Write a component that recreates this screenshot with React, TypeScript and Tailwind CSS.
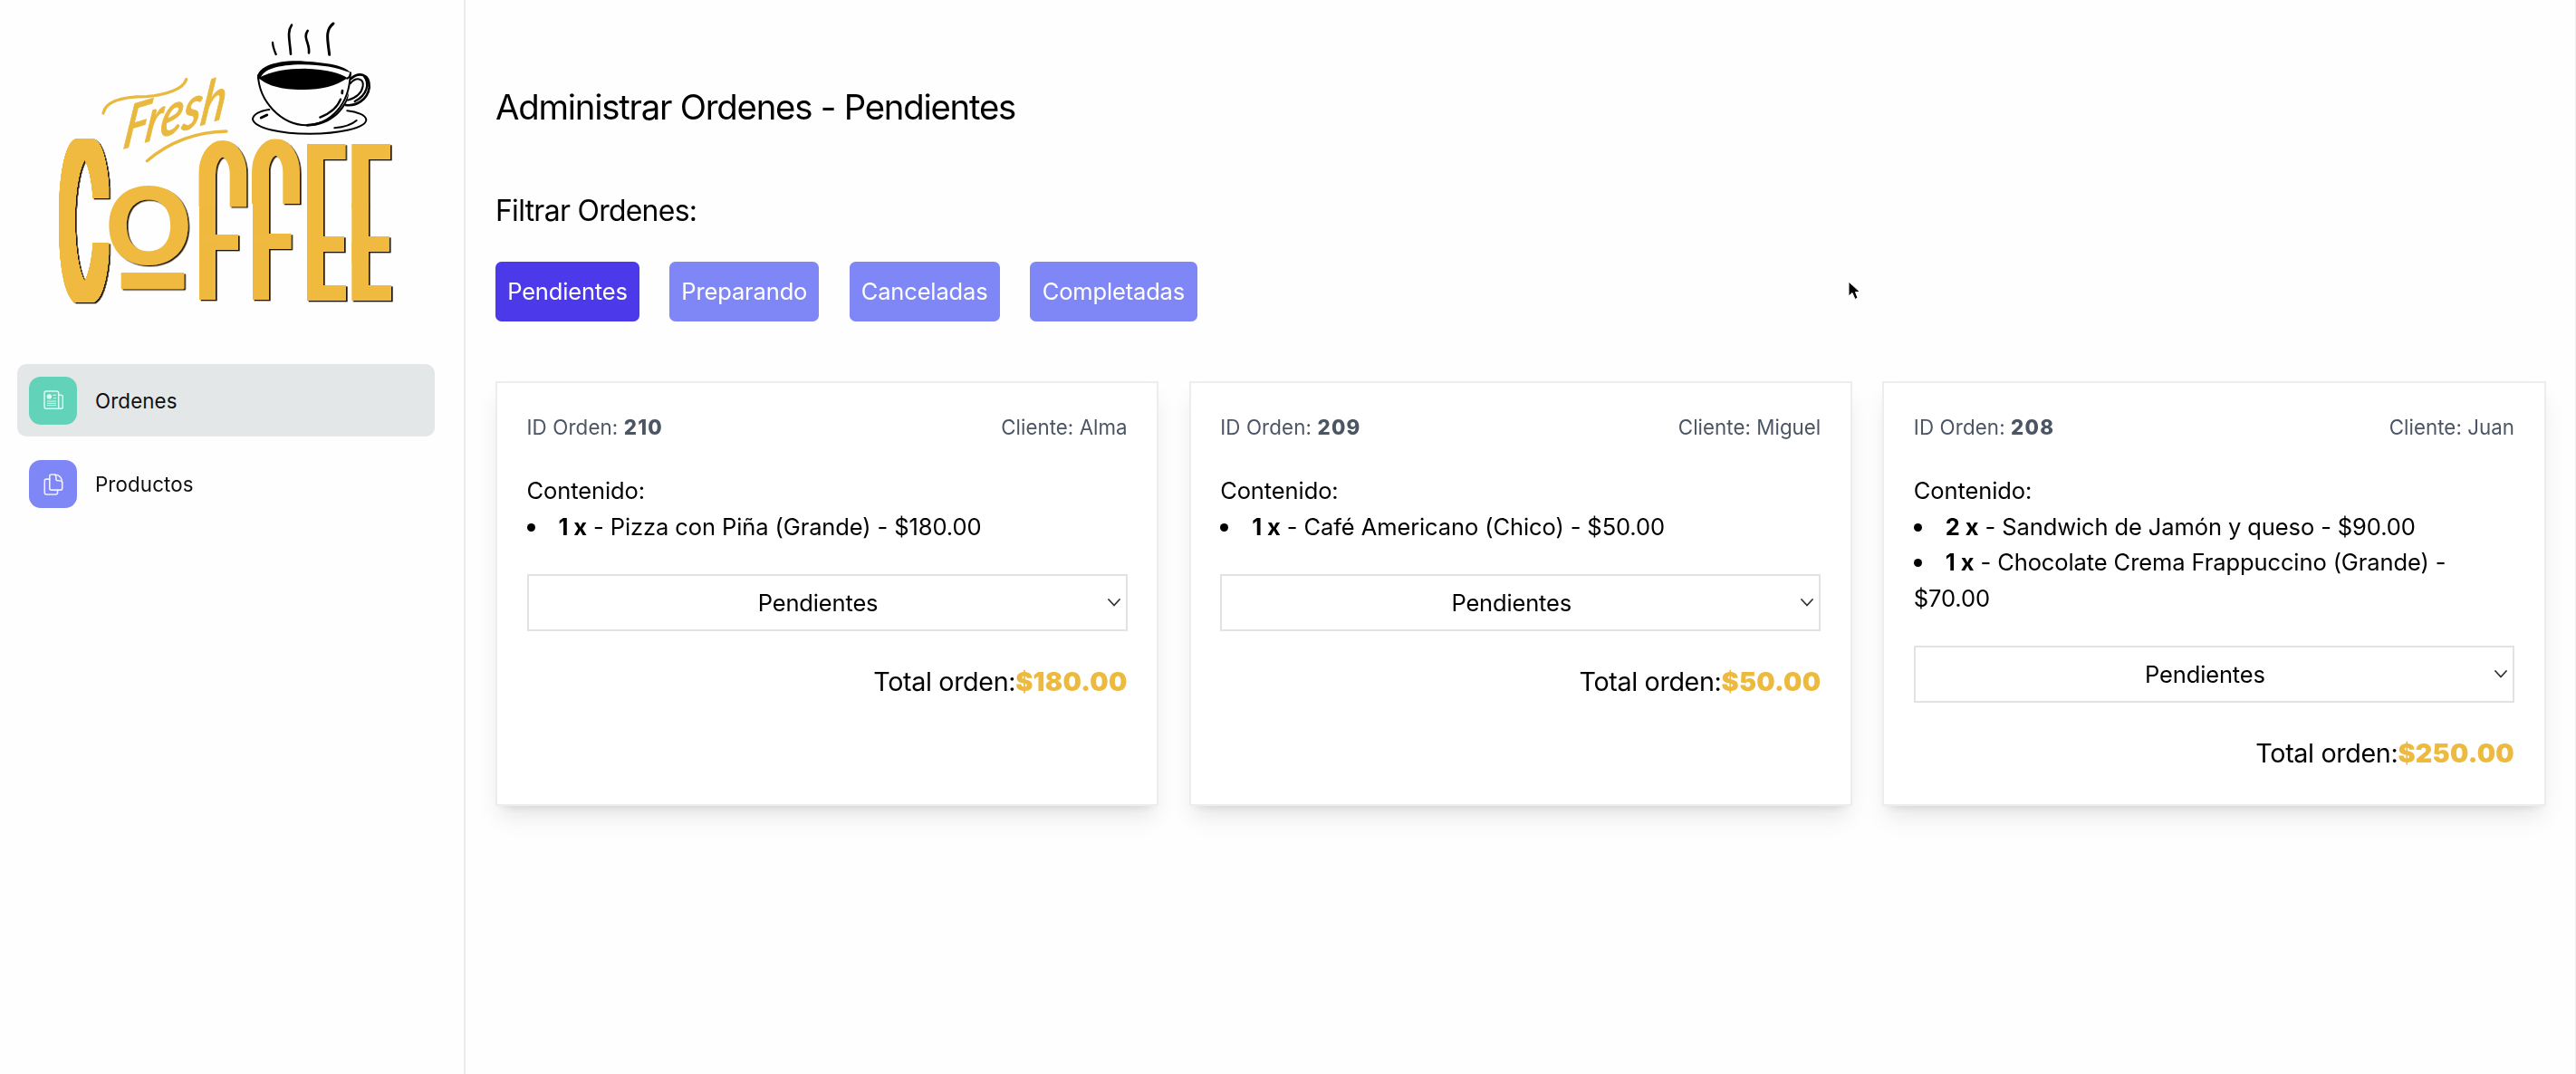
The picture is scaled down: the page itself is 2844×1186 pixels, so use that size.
import type { ReactNode } from "react";

type Line = { qty: number; text: string };
type Order = { id: number; client: string; lines: Line[]; total: string };

const orders: Order[] = [
  { id: 210, client: "Alma", lines: [{ qty: 1, text: "Pizza con Piña (Grande) - $180.00" }], total: "$180.00" },
  { id: 209, client: "Miguel", lines: [{ qty: 1, text: "Café Americano (Chico) - $50.00" }], total: "$50.00" },
  {
    id: 208,
    client: "Juan",
    lines: [
      { qty: 2, text: "Sandwich de Jamón y queso - $90.00" },
      { qty: 1, text: "Chocolate Crema Frappuccino (Grande) - $70.00" },
    ],
    total: "$250.00",
  },
];

const filters = [
  { label: "Pendientes", style: "w-[159px] bg-[#4b39ea]" },
  { label: "Preparando", style: "w-[165px] bg-[#7f86f5]" },
  { label: "Canceladas", style: "w-[166px] bg-[#7f86f5]" },
  { label: "Completadas", style: "w-[185px] bg-[#7f86f5]" },
];

function Letter({ children, transform }: { children: string; transform: string }) {
  return (
    <text transform={transform} fontFamily="Inter" fontWeight="100" fontSize="100">
      {children}
    </text>
  );
}

function Cup() {
  return (
    <g transform="translate(690 45)" fill="none" stroke="#000" strokeLinecap="round" strokeWidth="6">
      <path d="M93 96Q94 112 104 135" strokeWidth="7" />
      <path d="M156 38C140 60 150 90 153 134" strokeWidth="8" />
      <path d="M209 57C192 80 217 98 213 130" strokeWidth="8" />
      <path d="M294 33C265 55 276 90 281 136" strokeWidth="9" />
      <path d="M82 318C50 322 28 335 27 350C35 380 120 398 215 398C310 398 402 380 403 352C402 335 370 325 340 322" />
      <path d="M45 205C48 290 120 368 205 370C285 368 348 300 350 200" />
      <path d="M205 374C290 374 345 310 345 262C325 325 280 362 205 366Z" fill="#000" stroke="none" />
      <path d="M43 218C36 175 110 152 200 158C270 162 335 172 351 196C300 178 260 170 190 169C110 170 62 184 52 216Z" fill="#000" stroke="none" />
      <path d="M351 196Q352 208 340 215" />
      <path d="M46 213C90 190 140 182 200 182C270 184 320 197 341 214C300 242 250 253 190 252C120 251 80 241 46 213Z" fill="#000" stroke="none" />
      <path d="M352 216C378 192 415 198 413 245C408 285 370 308 335 303" strokeWidth="8" />
      <path d="M396 208C415 232 406 270 365 291" strokeWidth="7" />
      <path d="M350 232C370 208 395 215 392 240C388 265 365 280 342 287" />
      <path d="M250 344C290 328 310 305 318 284" strokeWidth="7" />
      <path d="M324 255L323 264" strokeWidth="8" />
      <path d="M55 345L74 336" strokeWidth="9" />
      <path d="M298 379C330 376 355 368 371 354" />
    </g>
  );
}

function Logo() {
  return (
    <svg viewBox="0 0 1260 1200" className="ml-[40px] h-[400px] w-[420px] shrink-0" aria-label="Fresh Coffee">
      <defs>
        <filter id="heavy" filterUnits="userSpaceOnUse" x="0" y="399" width="1260" height="681">
          <feMorphology operator="dilate" radius="24 18" />
          <feComponentTransfer>
            <feFuncA type="linear" slope="3" />
          </feComponentTransfer>
        </filter>
        {/* Thickens the letters and drops their crossbar below the middle. */}
        <filter id="heavyLowBar" filterUnits="userSpaceOnUse" x="0" y="399" width="1260" height="681">
          <feMorphology operator="dilate" radius="24 18" />
          <feComponentTransfer result="thick">
            <feFuncA type="linear" slope="3" />
          </feComponentTransfer>
          <feOffset in="thick" dx="0" dy="0" x="0" width="1260" y="399" height="291" result="top" />
          <feOffset in="thick" dx="0" dy="0" x="0" width="1260" y="600" height="201" result="band" />
          <feOffset in="band" dx="0" dy="72" x="0" y="399" width="1260" height="681" result="bar" />
          <feOffset in="thick" dx="0" dy="0" x="0" width="1260" y="801" height="279" result="bottom" />
          <feMerge>
            <feMergeNode in="top" />
            <feMergeNode in="bar" />
            <feMergeNode in="bottom" />
          </feMerge>
        </filter>
        <filter id="relief" filterUnits="userSpaceOnUse" x="0" y="399" width="1260" height="681">
          <feDropShadow dx="5" dy="4" stdDeviation="0.8" floodColor="#1d1500" floodOpacity="1" />
        </filter>
        <clipPath id="archA"><rect x="538" y="465" width="159" height="640" rx="79" ry="114" /></clipPath>
        <clipPath id="archB"><rect x="714" y="460" width="159" height="640" rx="79" ry="114" /></clipPath>
        <clipPath id="hookA"><rect x="500" y="400" width="240" height="285" /></clipPath>
        <clipPath id="hookB"><rect x="700" y="400" width="240" height="275" /></clipPath>
      </defs>
      <Cup />
      <g fill="#e9b93f" transform="translate(195 225)">
        <text
          transform="translate(88 270) rotate(-17) skewX(-26) scale(.8 1)"
          fontFamily="Lato"
          fontStyle="italic"
          fontWeight="500"
          fontSize="184"
          textLength="440"
          lengthAdjust="spacingAndGlyphs"
          stroke="#e9b93f"
          strokeWidth="3"
          strokeLinejoin="round"
        >
          Fresh
        </text>
        <g fill="none" stroke="#e9b93f" strokeLinecap="round" strokeWidth="10">
          <path d="M27 150C35 110 90 95 170 95C235 90 292 70 302 38" />
          <path d="M172 308C240 250 330 212 435 210" />
        </g>
      </g>
      <g fill="#f0ba3f" filter="url(#relief)">
        <g filter="url(#heavy)">
          <Letter transform="translate(85 979) scale(2.02 6.8)">C</Letter>
        </g>
        <text x="372" y="876" textAnchor="middle" fontFamily="Inter" fontWeight="700" fontSize="352" textLength="297" lengthAdjust="spacingAndGlyphs">O</text>
        <rect x="281" y="903" width="209" height="55" rx="4" />
        <g clipPath="url(#archA)">
          <g filter="url(#heavyLowBar)">
            <Letter transform="translate(540 974) scale(2.2 6.74)">F</Letter>
          </g>
        </g>
        <g clipPath="url(#hookA)">
          <rect x="566" y="493" width="103" height="400" rx="51" ry="85" fill="none" stroke="#f0ba3f" strokeWidth="56" />
        </g>
        <g clipPath="url(#archB)">
          <g filter="url(#heavyLowBar)">
            <Letter transform="translate(716 974) scale(2.2 6.8)">F</Letter>
          </g>
        </g>
        <g clipPath="url(#hookB)">
          <rect x="742" y="488" width="103" height="400" rx="51" ry="85" fill="none" stroke="#f0ba3f" strokeWidth="56" />
        </g>
        <g filter="url(#heavyLowBar)">
          <Letter transform="translate(899 977) scale(2 6.63)">E</Letter>
          <Letter transform="translate(1048 977) scale(2 6.63)">E</Letter>
        </g>
      </g>
    </svg>
  );
}

function NewsIcon() {
  return (
    <svg viewBox="0 0 66 66" className="size-[22px]" fill="none" stroke="#d9fbf3" strokeWidth="4.5" strokeLinejoin="round" strokeLinecap="round">
      <path d="M50 61H9Q3 61 3 55V9Q3 3 9 3H44Q50 3 50 9V55Q50 61 57 61Q64 61 64 55V22Q64 16 58 16H50" />
      <circle cx="19" cy="21" r="6" fill="#d9fbf3" />
      <path d="M32 16H41M34 26H41M13 36H41M13 43H41M13 50H41" strokeWidth="3" />
    </svg>
  );
}

function CopyIcon() {
  return (
    <svg viewBox="0 0 66 74" className="h-[24px] w-[22px]" fill="none" stroke="#eeeeff" strokeWidth="5" strokeLinejoin="round" strokeLinecap="round">
      <path d="M20 19H9Q3 19 3 25V65Q3 71 9 71H41Q47 71 47 65V56" />
      <path d="M26 3H38Q62 6 63 31V50Q63 56 57 56H26Q20 56 20 50V9Q20 3 26 3Z" />
      <path d="M38 4Q43 8 42 14V20Q43 24 48 24H54Q61 24 63 30" />
    </svg>
  );
}

function NavItem({ icon, label, active, tile }: { icon: ReactNode; label: string; active?: boolean; tile: string }) {
  return (
    <a className={`ml-[19px] flex h-[80px] w-[461px] items-center rounded-[10px] px-[13px] ${active ? "bg-[#e4e7e7]" : ""}`}>
      <span className={`flex size-[53px] items-center justify-center rounded-[13px] ${tile}`}>{icon}</span>
      <span className="ml-[20px] text-[22.3px] leading-[33px] tracking-[0.006em] text-[#111]">{label}</span>
    </a>
  );
}

function OrderCard({ order }: { order: Order }) {
  return (
    <article className="flex flex-col border-2 border-[#ebeeee] bg-white p-[32.5px] shadow-[0_16px_25px_-5px_rgba(0,0,0,0.1),0_7px_10px_-6px_rgba(0,0,0,0.1)]">
      <div className="flex justify-between text-[22.3px] leading-[32px] text-[#4b5563]">
        <p className="tracking-[0.006em]">
          ID Orden: <span className="font-extrabold tracking-[0.055em]">{order.id}</span>
        </p>
        <p className="tracking-[0.002em]">Cliente: {order.client}</p>
      </div>
      <div className="mt-[34.5px] text-[25.5px] leading-[39.5px] tracking-[-0.004em]">
        <p>Contenido:</p>
        <ul>
          {order.lines.map((line) => (
            <li key={line.text}>
              <span className="mr-[26px] mb-[4px] inline-block size-[9px] rounded-full bg-black align-baseline" />
              <span className="font-bold">{line.qty} x</span> - {line.text}
            </li>
          ))}
        </ul>
      </div>
      <button className="mt-[33px] flex h-[63px] shrink-0 items-center border-2 border-[#dfe3e4] pr-[6px] text-[25.5px] tracking-[-0.006em]">
        <span className="flex-1 pt-px text-center">Pendientes</span>
        <svg viewBox="0 0 14 9" className="h-[9px] w-[14px]" fill="none" stroke="#333" strokeWidth="1.8" strokeLinecap="round">
          <path d="M1 1L7 7.5L13 1" />
        </svg>
      </button>
      <p className="mt-[33px] text-right text-[28.7px] leading-[46px] tracking-[-0.012em]">
        Total orden:<span className="font-black tracking-[0.009em] text-[#edba40]">{order.total}</span>
      </p>
    </article>
  );
}

export default function App() {
  return (
    <div className="relative flex h-[1186px] w-[2844px] overflow-hidden border-r border-[#ececec] bg-[#fefefe] font-['Inter',sans-serif] text-black">
      <aside className="flex w-[514px] shrink-0 flex-col border-r-2 border-[#e9ecec]">
        <Logo />
        <nav className="mt-[2px] flex flex-col gap-[12.5px]">
          <NavItem icon={<NewsIcon />} label="Ordenes" active tile="bg-[#62d2b9]" />
          <NavItem icon={<CopyIcon />} label="Productos" tile="bg-[#7f86f5]" />
        </nav>
      </aside>
      <main className="flex-1 pt-[92px] pr-[32.5px] pl-[33px]">
        <h1 className="text-[38.3px] leading-[52px] tracking-[-0.032em]">Administrar Ordenes - Pendientes</h1>
        <h2 className="mt-[66px] text-[31.9px] leading-[46px] tracking-[-0.022em]">Filtrar Ordenes:</h2>
        <div className="mt-[33px] flex gap-[33.3px]">
          {filters.map((f) => (
            <button key={f.label} className={`h-[66px] rounded-[6.6px] pt-px text-[25.5px] tracking-[-0.006em] text-white ${f.style}`}>
              {f.label}
            </button>
          ))}
        </div>
        <section className="mt-[66px] grid grid-cols-3 gap-[33.5px]">
          {orders.map((o) => (
            <OrderCard key={o.id} order={o} />
          ))}
        </section>
      </main>
      <svg viewBox="0 0 14 22" className="absolute top-[310px] left-[2040px] h-[22px] w-[14px] overflow-visible">
        <path d="M1 1V17L5 13.5L8 20.5L11 19L8.500 12.500H13.500Z" fill="#000" stroke="#fff" strokeWidth="1" />
      </svg>
    </div>
  );
}
